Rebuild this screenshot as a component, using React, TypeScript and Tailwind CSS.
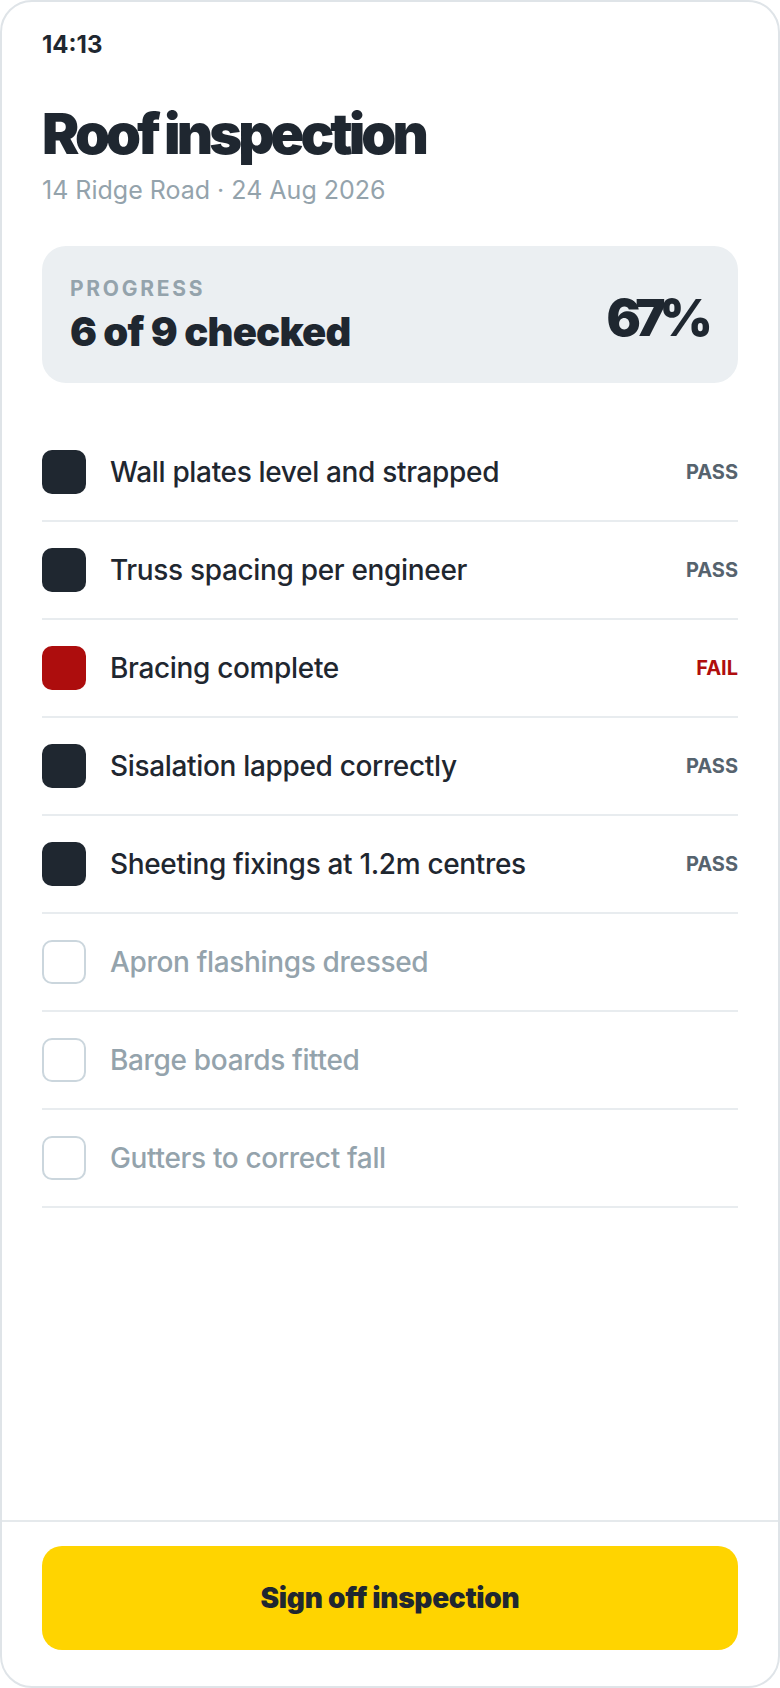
import React from "react";

type Item = { label: string; state: "pass" | "fail" | "todo" };

const items: Item[] = [
  { label: "Wall plates level and strapped", state: "pass" },
  { label: "Truss spacing per engineer", state: "pass" },
  { label: "Bracing complete", state: "fail" },
  { label: "Sisalation lapped correctly", state: "pass" },
  { label: "Sheeting fixings at 1.2m centres", state: "pass" },
  { label: "Apron flashings dressed", state: "todo" },
  { label: "Barge boards fitted", state: "todo" },
  { label: "Gutters to correct fall", state: "todo" },
];

function Row({ item }: { item: Item }) {
  const box =
    item.state === "pass"
      ? "bg-[#1f2730]"
      : item.state === "fail"
      ? "bg-[#ad0d0d]"
      : "border-2 border-[#cbd6dd] bg-white";
  const text = item.state === "todo" ? "text-[#94a3ac]" : "text-[#1f2730]";
  return (
    <div className="flex items-center py-[26px] border-b-2 border-[#e8ecef]">
      <div className={`w-[44px] h-[44px] rounded-[10px] shrink-0 ${box}`} />
      <div className={`ml-[24px] flex-1 text-[28px] leading-[36px] font-medium tracking-[-0.012em] ${text}`}>
        {item.label}
      </div>
      {item.state === "pass" && (
        <div className="text-[20px] leading-[24px] font-bold text-[#56636e]">PASS</div>
      )}
      {item.state === "fail" && (
        <div className="text-[20px] leading-[24px] font-bold text-[#b00e0e]">FAIL</div>
      )}
    </div>
  );
}

export default function App() {
  return (
    <div className="w-[780px] h-[1688px] bg-white font-['Inter',sans-serif]">
      <div className="w-full h-full border-2 border-[#dfe4e8] rounded-[32px] flex flex-col overflow-hidden bg-white">
        <div className="flex-1 px-[40px] pt-[27px]">
          <div className="text-[24px] leading-[32px] font-bold text-[#1f2730]">14:13</div>
          <h1 className="mt-[41px] text-[56px] leading-[64px] font-black tracking-[-0.07em] text-[#1f2730]">
            Roof inspection
          </h1>
          <div className="mt-[8px] text-[25px] leading-[32px] text-[#94a3ac]">
            14 Ridge Road · 24 Aug 2026
          </div>
          <div className="mt-[40px] rounded-[24px] bg-[#ebeff2] px-[28px] pt-[31px] pb-[27px] flex items-center justify-between">
            <div>
              <div className="text-[21px] leading-[24px] font-bold tracking-[0.13em] text-[#94a3ac]">
                PROGRESS
              </div>
              <div className="mt-[7px] text-[40px] leading-[48px] font-black tracking-[-0.02em] text-[#1f2730]">
                6 of 9 checked
              </div>
            </div>
            <div className="mr-[3px] mt-[2px] text-[51px] leading-[60px] font-black tracking-[-0.115em] text-[#1f2730]">
              67%
            </div>
          </div>
          <div className="mt-[41px]">
            {items.map((it) => (
              <Row key={it.label} item={it} />
            ))}
          </div>
        </div>
        <div className="border-t-2 border-[#e5e9ec] px-[40px] pt-[24px] pb-[36px]">
          <div className="h-[104px] rounded-[20px] bg-[#ffd400] flex items-center justify-center text-[28px] font-black tracking-[-0.01em] text-[#1f2730]">
            Sign off inspection
          </div>
        </div>
      </div>
    </div>
  );
}
